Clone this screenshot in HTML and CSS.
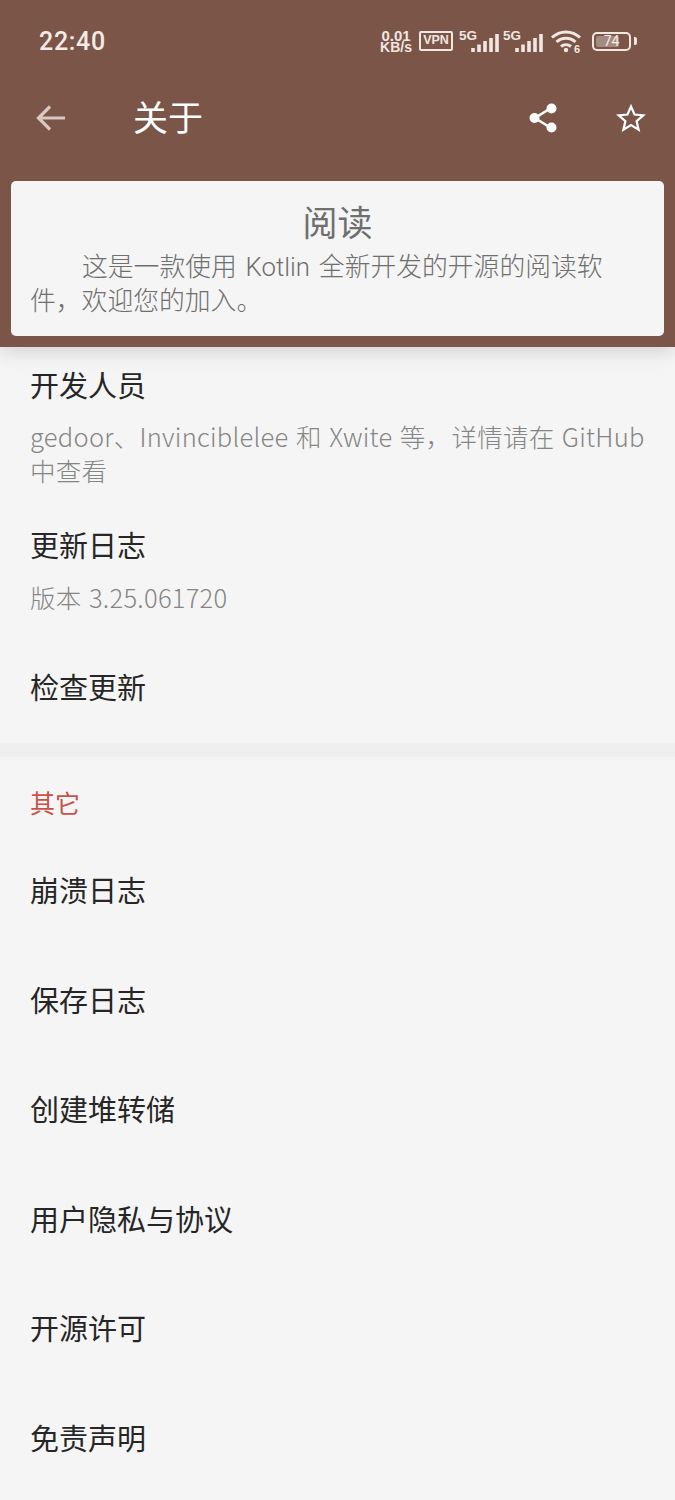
FILE: index.html
```html
<!DOCTYPE html>
<html lang="zh-CN">
<head>
<meta charset="utf-8">
<title>关于</title>
<link rel="stylesheet" href="styles.css">
</head>
<body>
<div class="app">
  <header class="head">
    <div class="status">
      <span class="time">22:40</span>
      <div class="status-icons">
        <span class="speed"><b>0.01</b><b>KB/s</b></span>
        <span class="vpn">VPN</span>
        <span class="signal"><i class="fiveg">5G</i>
          <svg width="28" height="19" viewBox="0 0 28 19"><path d="M2 19v-4M8 19v-7.500M14 19V8M20 19V5M26 19V1" stroke="#f1e6e0" stroke-width="3.600" fill="none"/></svg></span>
        <span class="signal"><i class="fiveg">5G</i>
          <svg width="28" height="19" viewBox="0 0 28 19"><path d="M2 19v-4M8 19v-7.500M14 19V8M20 19V5M26 19V1" stroke="#f1e6e0" stroke-width="3.600" fill="none"/></svg></span>
        <svg class="wifi" width="34" height="24" viewBox="0 0 34 24"><path d="M2 8.500C10 1 22 1 30 8.500M6.500 13C12 8 20 8 25.500 13M11 17.500c3-2.500 7-2.500 10 0" stroke="#f1e6e0" stroke-width="3" fill="none"/><circle cx="16" cy="21" r="2.200" fill="#f1e6e0"/><text x="24" y="23.500" class="wifi-num">6</text></svg>
        <span class="battery"><span class="battery-body"><span class="battery-fill"></span><span class="battery-num">74</span></span><span class="battery-cap"></span></span>
      </div>
    </div>
    <div class="toolbar">
      <svg class="back" width="32" height="32" viewBox="0 0 32 32"><path d="M30 16H4M15 4.500 3.500 16 15 27.500" stroke="#d9c8c0" stroke-width="3.200" fill="none"/></svg>
      <h1 class="title">关于</h1>
      <svg class="share" width="30" height="32" viewBox="0 0 30 32"><path d="M23 6 7 16l16 10" stroke="#fff" stroke-width="2.600" fill="none"/><circle cx="23.500" cy="6.500" r="5" fill="#fff"/><circle cx="6.500" cy="16" r="5" fill="#fff"/><circle cx="23.500" cy="25.500" r="5" fill="#fff"/></svg>
      <svg class="star" width="30" height="30" viewBox="0 0 30 30"><path d="M15 3.500l3.500 8 8.800.8-6.700 5.800 2 8.600L15 22.100l-7.600 4.600 2-8.600-6.700-5.800 8.800-.8z" stroke="#fff" stroke-width="2.200" fill="none" stroke-linejoin="miter"/></svg>
    </div>
    <section class="card">
      <h2 class="card-title">阅读</h2>
      <p class="card-text">这是一款使用 Kotlin 全新开发的开源的阅读软件，欢迎您的加入。</p>
    </section>
  </header>
  <main class="list">
    <div class="group first">
      <div class="row two-line"><div class="label">开发人员</div><div class="summary">gedoor、Invinciblelee 和 Xwite 等，详情请在 GitHub 中查看</div></div>
      <div class="row update"><div class="label">更新日志</div><div class="summary">版本 3.25.061720</div></div>
      <div class="row check"><div class="label">检查更新</div></div>
    </div>
    <div class="divider"></div>
    <div class="section-title">其它</div>
    <div class="row plain"><div class="label">崩溃日志</div></div>
    <div class="row plain"><div class="label">保存日志</div></div>
    <div class="row plain"><div class="label">创建堆转储</div></div>
    <div class="row plain"><div class="label">用户隐私与协议</div></div>
    <div class="row plain"><div class="label">开源许可</div></div>
    <div class="row plain"><div class="label">免责声明</div></div>
  </main>
</div>
</body>
</html>
```
FILE: styles.css
```css
* { box-sizing: border-box; }
html, body { margin: 0; padding: 0; }
body {
  background: #f5f5f5;
  font-family: "Noto Sans CJK SC", sans-serif;
  font-weight: 300;
  color: #262626;
}
.app { width: 675px; height: 1500px; overflow: hidden; display: flex; flex-direction: column; }
.head {
  background: #7b5548;
  height: 347px;
  padding-top: 16px;
  display: flex;
  flex-direction: column;
  box-shadow: 0 5px 18px rgba(0,0,0,.14);
  position: relative;
  z-index: 1;
}
.status { height: 50px; padding: 0 38px 0 39px; display: flex; align-items: center; justify-content: space-between; }
.time { font: 500 25px/1 Roboto, sans-serif; color: #f4ebe6; letter-spacing: .7px; }
.status-icons { display: flex; align-items: center; color: #f1e6e0; }
.speed { display: flex; flex-direction: column; width: 32px; font: 700 14px/11px "Liberation Sans", sans-serif; text-align: center; margin-right: 7px; }
.speed b:first-child { font-size: 15px; line-height: 12px; }
.vpn { width: 34px; height: 20px; border: 2.500px solid #f1e6e0; border-radius: 2px; font: 700 12.500px/15px "Liberation Sans", sans-serif; text-align: center; margin-right: 6px; }
.signal { display: block; width: 39px; height: 22px; position: relative; }
.fiveg { position: absolute; left: 0; top: 0; font: 700 13.500px/12px "Liberation Sans", sans-serif; }
.signal svg { position: absolute; right: -1px; bottom: 0; }
.signal + .signal { margin-left: 5px; }
.wifi { margin-left: 8px; }
.wifi-num { font: 700 11px "Liberation Sans", sans-serif; fill: #f1e6e0; }
.battery { display: flex; align-items: center; margin-left: 8px; }
.battery-body { width: 39px; height: 19px; border: 2px solid #f1e6e0; border-radius: 5px; position: relative; display: block; }
.battery-fill { position: absolute; left: 2px; top: 2px; bottom: 2px; width: 23px; background: #a58a7f; border-radius: 2px; }
.battery-num { position: absolute; inset: 0; text-align: center; font: 400 14px/15px Roboto, sans-serif; color: #f4ebe6; }
.battery-cap { width: 3px; height: 8px; background: #f1e6e0; margin-left: 3px; border-radius: 0 2px 2px 0; }
.toolbar { height: 106px; display: flex; align-items: center; padding: 0 29px 0 35px; }
.back { margin-top: -3px; }
.title { margin: -8px 0 0 66px; font-size: 35px; font-weight: 400; line-height: 1; color: #fff; flex: 1; }
.share { margin: -3px 58px 0 0; }
.star { margin-top: -3px; }
.card {
  margin: 9px 11px 0;
  height: 155px;
  background: #f5f5f5;
  border-radius: 5px;
  padding: 18px 19px 0;
  color: #6f6f6f;
}
.card-title { margin: 0; font-size: 35px; font-weight: 400; line-height: 44px; text-align: center; }
.card-text { margin: 7px 0 0; font-family: Roboto, "Noto Sans CJK SC", sans-serif; font-size: 25.800px; line-height: 34px; text-indent: 52px; word-spacing: 2.500px; }
.list { flex: 1; }
.row { padding: 0 30px; }
.label { font-size: 29px; font-weight: 400; line-height: 40px; color: #262626; }
.summary { font-size: 25.500px; line-height: 34px; color: #858585; letter-spacing: .27px; word-spacing: 1.500px; }
.two-line { padding-top: 17px; height: 160px; }
.two-line .summary { margin-top: 15px; }
.update { padding-top: 17px; height: 122px; }
.update .summary { margin-top: 16px; }
.check { height: 114px; display: flex; align-items: flex-start; padding-top: 37px; }
.group { height: 396px; }
.divider { height: 14px; background: #efefef; }
.section-title { font-size: 25px; font-weight: 400; line-height: 32px; color: #c8524a; padding: 29px 30px 0; height: 80px; }
.plain { height: 109.500px; display: flex; align-items: flex-start; }
.plain .label { margin-top: 32px; }
```
